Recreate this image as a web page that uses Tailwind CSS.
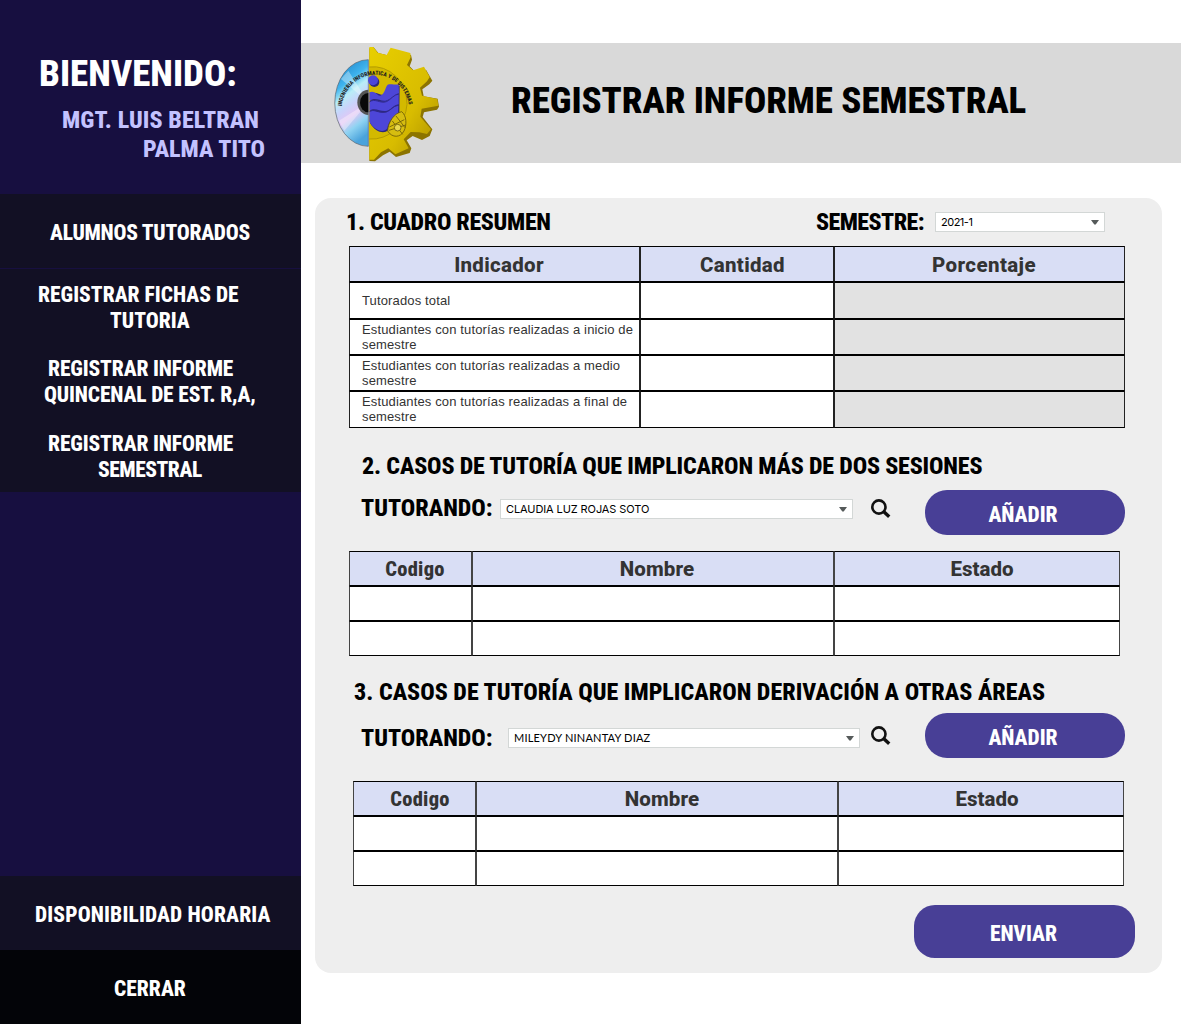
<!DOCTYPE html>
<html lang="es">
<head>
<meta charset="utf-8">
<title>Registrar informe semestral</title>
<script src="https://cdn.jsdelivr.net/npm/@tailwindcss/browser@4"></script>
</head>
<body class="flex h-[1024px] w-[1181px] overflow-hidden bg-white font-['Roboto',sans-serif] font-extrabold font-stretch-75% whitespace-nowrap">

<aside class="flex w-[301px] shrink-0 flex-col bg-[#170f40] text-white">
  <div class="flex h-[194px] shrink-0 flex-col items-start pt-[54px]">
    <h1 class="ml-[39px] text-[37px] leading-[40px]">BIENVENIDO:</h1>
    <p class="mt-3 ml-[62px] text-[24px] leading-[29px] tracking-[0.1px] text-[#c3c2ff]">MGT. LUIS BELTRAN</p>
    <p class="ml-[143px] text-[24px] leading-[29px] text-[#c3c2ff]">PALMA TITO</p>
  </div>
  <nav class="flex shrink-0 flex-col bg-[#121024] text-[21.5px] leading-[26px]">
    <a class="flex h-[75px] items-start border-b border-[#170f40] pt-[26px]"><span class="ml-[50px] tracking-[-0.25px]">ALUMNOS TUTORADOS</span></a>
    <a class="flex h-[74px] flex-col items-start pt-[13px]"><span class="ml-[38px]">REGISTRAR FICHAS DE</span><span class="ml-[110px]">TUTORIA</span></a>
    <a class="flex h-[75px] flex-col items-start pt-[13px]"><span class="ml-12 tracking-[-0.15px]">REGISTRAR INFORME</span><span class="ml-11 tracking-[-0.15px]">QUINCENAL DE EST. R,A,</span></a>
    <a class="flex h-[74px] flex-col items-start pt-[13px]"><span class="ml-12 tracking-[-0.15px]">REGISTRAR INFORME</span><span class="ml-[98px] tracking-[-0.45px]">SEMESTRAL</span></a>
  </nav>
  <a class="mt-auto flex h-[74px] shrink-0 items-center bg-[#121024] pt-[5px] text-[21.5px]"><span class="ml-[35px] tracking-[0.15px]">DISPONIBILIDAD HORARIA</span></a>
  <a class="flex h-[74px] shrink-0 items-center bg-[#030408] pt-[5px] text-[21.5px]"><span class="ml-[114px]">CERRAR</span></a>
</aside>

<main class="flex grow flex-col">
  <header class="mt-[43px] flex h-[120px] shrink-0 items-center bg-[#d9d9d9]">
    <svg class="ml-6 h-[128px] w-[125px] shrink-0" viewBox="0 0 375 384">
      <defs>
        <linearGradient id="cd" x1="0.2" y1="0" x2="0.5" y2="1">
          <stop offset="0" stop-color="#1c7fc4"/><stop offset=".28" stop-color="#3fb4ee"/><stop offset=".42" stop-color="#b9edf7"/><stop offset=".55" stop-color="#c9d3fb"/><stop offset=".68" stop-color="#e3c6f4"/><stop offset=".82" stop-color="#8fd3f2"/><stop offset="1" stop-color="#4aa3dc"/>
        </linearGradient>
        <linearGradient id="gear" x1="0" y1="0" x2="1" y2="1">
          <stop offset="0" stop-color="#e8cf00"/><stop offset=".6" stop-color="#d8bc00"/><stop offset="1" stop-color="#a88c00"/>
        </linearGradient>
        <path id="arc" d="M50 202 A102 110 0 0 1 252 202"/>
      </defs>
      <path d="M130 62 A100 129 0 0 0 130 322 Z" fill="url(#cd)" stroke="#56616d" stroke-width="2"/>
      <path d="M130 190 L48 120 L70 95 Z M130 190 L42 245 L58 275 Z" fill="#fff" opacity=".35"/>
      <path d="M130 152 A33 38 0 0 0 130 228 Z" fill="#555"/>
      <path d="M130 162 A25 29 0 0 0 130 220 Z" fill="#090909"/>
      <path d="M133 28 L146 25 L160 42 L187 49 L205 33 L258 48 L261 62 L254 82 L270 98 L303 92 L322 125 L313 136 L292 151 L296 172 L338 179 L342 203 L336 212 L297 220 L293 234 L322 271 L314 291 L291 303 L263 291 L245 304 L259 328 L254 342 L213 354 L194 338 L174 349 L150 367 L133 366 Z" fill="#8c7400"/>
      <path d="M133 24 L145 24 L158 41 L185 48 L197 26 L256 42 L257 55 L246 78 L264 94 L297 83 L314 114 L306 127 L285 146 L291 170 L337 180 L340 200 L290 209 L286 233 L318 271 L306 285 L283 280 L257 279 L236 301 L251 328 L211 346 L190 328 L168 340 L147 362 L133 362 Z" fill="url(#gear)"/>
      <path d="M133 84 A101 112 0 0 1 246 196 A106 112 0 0 1 133 300" fill="#d3b900" stroke="#b39b00" stroke-width="3"/>
      <g fill="#2d287d" transform="translate(3 4)">
        <circle cx="145" cy="125" r="15"/><path d="M133 160 C155 150 165 175 184 158 C198 144 205 132 221 136 L220 230 C205 238 195 250 187 270 C172 282 148 275 132 248 Z"/>
      </g>
      <g fill="#4d46d8">
        <circle cx="144" cy="124" r="15"/>
        <path d="M133 160 C150 152 158 172 166 170 C182 166 180 138 192 136 C202 134 208 138 221 136 L222 163 C208 166 193 184 181 185 C164 187 150 172 133 186 Z"/>
        <path d="M133 189 C150 175 165 194 184 187 C199 180 207 165 221 166 L221 196 C204 198 197 216 181 216 C163 217 150 204 133 215 Z"/>
        <path d="M133 218 C151 210 162 226 183 220 C199 214 206 200 220 201 L219 229 C203 236 190 248 187 268 C174 284 149 274 133 248 Z"/>
      </g>
      <path d="M133 189 C150 176 165 195 184 188 C199 181 207 166 221 166 M133 217 C152 208 163 224 184 219 C199 213 206 199 220 199" fill="none" stroke="#302a91" stroke-width="3"/>
      <path d="M160 161 C176 160 178 140 189 133 C178 130 166 142 160 161 Z" fill="#d3b900"/>
      <g fill="none" stroke="#6b5a09" stroke-width="2.5">
        <path d="M188 276 C190 247 208 223 230 218 C245 230 246 257 237 276 C226 296 202 298 188 276 Z" fill="#d6bd10"/>
        <path d="M193 264 L238 242 M192 274 L242 258 M202 246 L233 286 M213 231 L240 266"/>
        <circle cx="218" cy="266" r="10" fill="#e9d84f"/>
      </g>
      <text class="font-['Roboto',sans-serif] text-[17px] font-extrabold" fill="#22211c"><textPath href="#arc">INGENIERIA INFORMATICA Y DE SISTEMAS</textPath></text>
    </svg>
    <h2 class="ml-[61px] pb-[5px] text-[37px] leading-[40px] tracking-[-0.07px]">REGISTRAR INFORME SEMESTRAL</h2>
  </header>

  <section class="mt-[35px] ml-[14px] flex h-[775px] w-[847px] flex-col items-start rounded-[16px] bg-[#eee]">
    <div class="mt-[14px] flex h-5 items-center text-[24px] leading-[24px]">
      <h3 class="ml-[31px] w-[470px] tracking-[-0.32px]">1. CUADRO RESUMEN</h3>
      <label class="w-[119px] tracking-[-0.55px]">SEMESTRE:</label>
      <div class="flex h-5 w-[170px] items-center justify-between border border-[#d3d7d6] bg-white px-[5px] font-['Inter',sans-serif] text-[11px] font-normal"><span class="tracking-[-0.5px]">2021-1</span><svg class="h-[5px] w-2" viewBox="0 0 8 5"><path d="M0 0H8L4.7 4.5H3.3Z" fill="#555a5a"/></svg></div>
    </div>

    <div class="mt-[14px] ml-[34px] grid grid-cols-[291px_194px_291px] grid-rows-[36px_37px_36px_36px_37px] font-['Liberation_Sans',sans-serif] text-[13px] leading-[15px] font-normal tracking-[0.14px] text-[#333] *:flex *:items-center *:border *:border-x-[#222] *:border-y-black *:bg-white">
      <div class="justify-center bg-[#d9def5]! pt-[3px] pl-[9px] font-['Roboto',sans-serif] text-[20.5px] font-extrabold font-stretch-100% tracking-[0.3px]">Indicador</div>
      <div class="justify-center bg-[#d9def5]! pt-[3px] pl-[11px] font-['Roboto',sans-serif] text-[20.5px] font-extrabold font-stretch-100% tracking-[0.3px]">Cantidad</div>
      <div class="justify-center bg-[#d9def5]! pt-[3px] pl-[9px] font-['Roboto',sans-serif] text-[20.5px] font-extrabold font-stretch-100% tracking-[0.4px]">Porcentaje</div>
      <div class="pl-3">Tutorados total</div><div></div><div class="bg-[#e2e2e2]!"></div>
      <div class="pl-3">Estudiantes con tutorías realizadas a inicio de<br>semestre</div><div></div><div class="bg-[#e2e2e2]!"></div>
      <div class="pl-3">Estudiantes con tutorías realizadas a medio<br>semestre</div><div></div><div class="bg-[#e2e2e2]!"></div>
      <div class="pb-[2px] pl-3">Estudiantes con tutorías realizadas a final de<br>semestre</div><div></div><div class="bg-[#e2e2e2]!"></div>
    </div>

    <h3 class="mt-[26px] ml-[47px] text-[24px] leading-[24px] tracking-[-0.17px]">2. CASOS DE TUTORÍA QUE IMPLICARON MÁS DE DOS SESIONES</h3>
    <div class="mt-3 flex h-[45px] items-start">
      <label class="mt-[6px] ml-[46px] w-[139px] text-[24px] leading-[24px]">TUTORANDO:</label>
      <div class="mt-[9px] flex h-5 w-[353px] items-center justify-between border border-[#d3d7d6] bg-white px-[5px] font-['Inter',sans-serif] text-[11px] font-normal"><span class="tracking-[-0.1px]">CLAUDIA LUZ ROJAS SOTO</span><svg class="h-[5px] w-2" viewBox="0 0 8 5"><path d="M0 0H8L4.7 4.5H3.3Z" fill="#555a5a"/></svg></div>
      <svg class="mt-[9px] ml-[18px] size-5" viewBox="0 0 20 20" fill="none" stroke="#111"><circle cx="7.9" cy="8" r="6.6" stroke-width="2.6"/><path d="M12.6 12.6L18.2 17.8" stroke-width="3.4"/></svg>
      <button class="ml-[34px] h-[45px] w-[200px] rounded-[22px] bg-[#483f96] pt-[6px] pr-1 text-[21.5px] text-white">AÑADIR</button>
    </div>

    <div class="mt-4 ml-[34px] grid grid-cols-[123px_362px_286px] grid-rows-[35px_35px_35px] text-[20.5px] text-[#333] *:flex *:items-center *:justify-center *:border *:border-x-[#444] *:border-y-black *:bg-white">
      <div class="bg-[#d9def5]! pt-px pl-[9px] tracking-[0.3px]">Codigo</div><div class="bg-[#d9def5]! pt-px pl-[8px] font-stretch-100% tracking-[0.1px]">Nombre</div><div class="bg-[#d9def5]! pt-px pl-[10px] font-stretch-100%">Estado</div>
      <div></div><div></div><div></div>
      <div></div><div></div><div></div>
    </div>

    <h3 class="mt-6 ml-[39px] text-[24px] leading-[24px] tracking-[0.02px]">3. CASOS DE TUTORÍA QUE IMPLICARON DERIVACIÓN A OTRAS ÁREAS</h3>
    <div class="mt-[9px] flex h-[45px] items-start">
      <label class="mt-[13px] ml-[46px] w-[147px] text-[24px] leading-[24px]">TUTORANDO:</label>
      <div class="mt-[15px] flex h-5 w-[352px] items-center justify-between border border-[#d3d7d6] bg-white px-[5px] font-['Lato',sans-serif] text-[11px] font-normal"><span class="tracking-[0.2px]">MILEYDY NINANTAY DIAZ</span><svg class="h-[5px] w-2" viewBox="0 0 8 5"><path d="M0 0H8L4.7 4.5H3.3Z" fill="#555a5a"/></svg></div>
      <svg class="mt-[13px] ml-[11px] size-5" viewBox="0 0 20 20" fill="none" stroke="#111"><circle cx="7.9" cy="8" r="6.6" stroke-width="2.6"/><path d="M12.6 12.6L18.2 17.8" stroke-width="3.4"/></svg>
      <button class="ml-[34px] h-[45px] w-[200px] rounded-[22px] bg-[#483f96] pt-[6px] pr-1 text-[21.5px] text-white">AÑADIR</button>
    </div>

    <div class="mt-[23px] ml-[38px] grid grid-cols-[123px_362px_286px] grid-rows-[35px_35px_35px] text-[20.5px] text-[#333] *:flex *:items-center *:justify-center *:border *:border-x-[#444] *:border-y-black *:bg-white">
      <div class="bg-[#d9def5]! pt-px pl-[11px] tracking-[0.3px]">Codigo</div><div class="bg-[#d9def5]! pt-px pl-[10px] font-stretch-100% tracking-[0.1px]">Nombre</div><div class="bg-[#d9def5]! pt-px pl-[12px] font-stretch-100%">Estado</div>
      <div></div><div></div><div></div>
      <div></div><div></div><div></div>
    </div>

    <button class="mt-[19px] ml-[599px] h-[53px] w-[221px] rounded-[21px] bg-[#483f96] pt-[6px] pr-[2px] text-[21.5px] text-white">ENVIAR</button>
  </section>
</main>
</body>
</html>
